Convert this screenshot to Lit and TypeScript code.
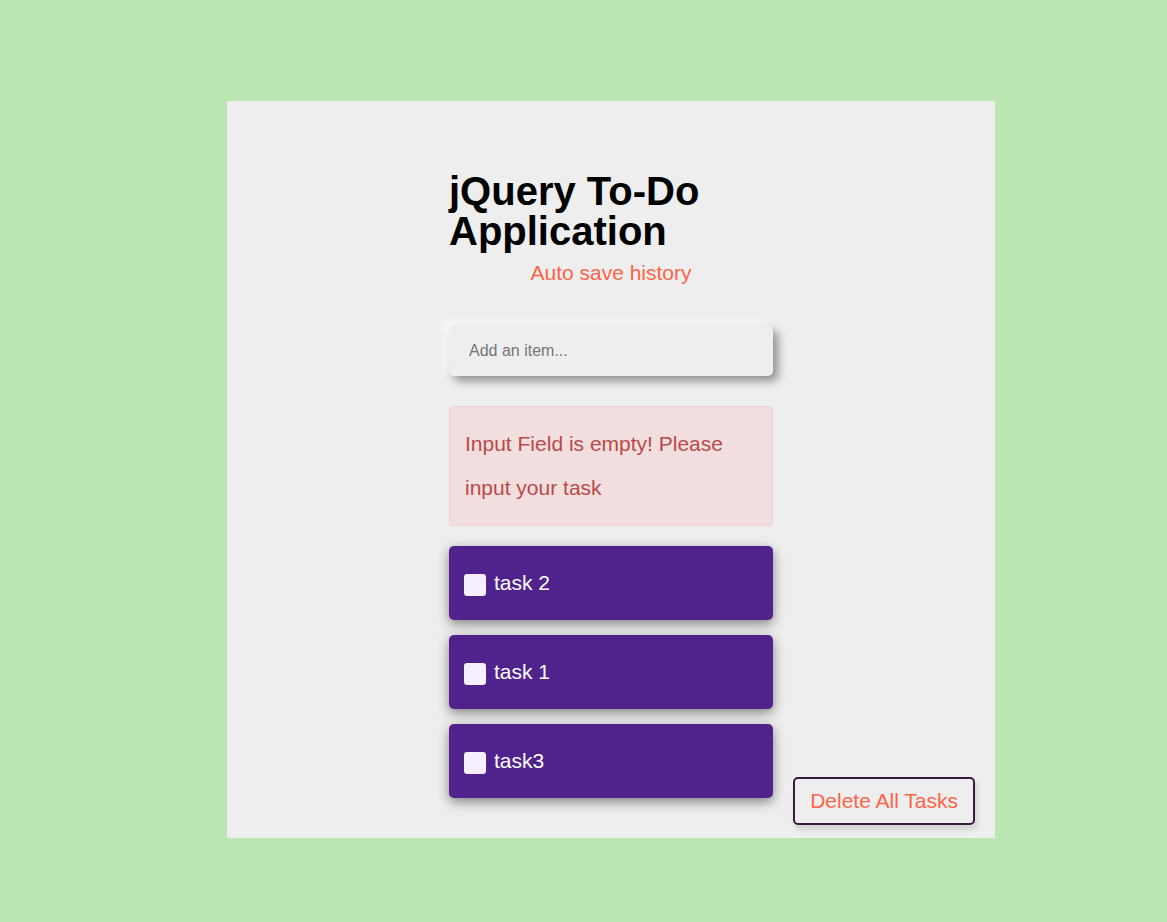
import { LitElement, html, css } from "lit";
import { customElement, state } from "lit/decorators.js";

@customElement("todo-item")
class TodoItem extends LitElement {
  static properties = { label: { type: String } };
  declare label: string;

  static styles = css`
    :host {
      display: block;
    }
    .task {
      display: flex;
      align-items: center;
      gap: 8px;
      padding: 15px;
      border-radius: 5px;
      background: #50238c;
      color: #fff;
      line-height: 44px;
      box-shadow: 0 4px 12px 0 rgba(0, 0, 0, 0.45);
    }
    .check {
      appearance: none;
      flex: none;
      width: 22px;
      height: 22px;
      margin: 4px 0 0;
      border-radius: 3px;
      background: #f7effd;
      cursor: pointer;
    }
    .check:checked {
      background: #ff6347;
    }
  `;

  render() {
    return html`
      <label class="task">
        <input class="check" type="checkbox" />
        <span>${this.label}</span>
      </label>
    `;
  }
}

@customElement("app-root")
class AppRoot extends LitElement {
  @state() tasks = ["task 2", "task 1", "task3"];
  @state() empty = true;

  static styles = css`
    * {
      box-sizing: border-box;
    }
    :host {
      display: block;
      box-sizing: border-box;
      min-height: 100vh;
      padding: 101px 0 84px 55px;
      background: #bbe6b3;
      font-family: "Liberation Sans", Arial, sans-serif;
      font-size: 21px;
      line-height: 44px;
    }
    .panel {
      display: grid;
      grid-template-columns: 1fr minmax(0, 324px) 1fr;
      width: 100%;
      max-width: 768px;
      margin: 0 auto;
      background: #eee;
    }
    .content {
      grid-column: 2;
      padding: 70px 0 40px;
    }
    .title {
      margin: 0;
      font-size: 40px;
      line-height: 40px;
      font-weight: 700;
      color: #000;
    }
    .subtitle {
      margin: 0 0 31px;
      text-align: center;
      color: #ff6347;
    }
    .field {
      display: block;
      width: 100%;
      height: 50px;
      padding: 0 20px;
      border: 0;
      border-radius: 5px;
      outline: 0;
      background: #eee;
      font: inherit;
      font-size: 16px;
      line-height: 20px;
      box-shadow: 5px 5px 10px 0 rgba(0, 0, 0, 0.4),
        -5px -5px 10px 0 rgba(255, 255, 255, 0.7);
    }
    .field::placeholder {
      color: #757575;
      opacity: 1;
    }
    .alert {
      margin: 30px 0 20px;
      padding: 15px;
      border: 1px solid #eed3d7;
      border-radius: 4px;
      background: #f2dede;
      color: #b94a48;
    }
    .tasks {
      display: grid;
      gap: 15px;
      margin: 0;
      padding: 0;
      list-style: none;
    }
    .clear {
      grid-column: 3;
      align-self: end;
      justify-self: end;
      height: 48px;
      margin: 0 20px 13px;
      padding: 0 15px;
      border: 2px solid #3a1a40;
      border-radius: 5px;
      background: #eee;
      color: #ff6347;
      font: inherit;
      line-height: 44px;
      white-space: nowrap;
      cursor: pointer;
      box-shadow: 2px 4px 4px 1px rgba(0, 0, 0, 0.1);
    }
  `;

  private onKey(e: KeyboardEvent) {
    if (e.key !== "Enter") return;
    const field = e.target as HTMLInputElement;
    const text = field.value.trim();
    this.empty = text === "";
    if (text) {
      this.tasks = [...this.tasks, text];
      field.value = "";
    }
  }

  render() {
    return html`
      <main class="panel">
        <div class="content">
          <h1 class="title">jQuery To-Do Application</h1>
          <p class="subtitle">Auto save history</p>
          <input
            class="field"
            type="text"
            placeholder="Add an item..."
            aria-label="Add an item..."
            @keydown=${this.onKey}
          />
          ${this.empty
            ? html`<div class="alert" role="alert">Input Field is empty! Please input your task</div>`
            : null}
          <ul class="tasks">
            ${this.tasks.map((t) => html`<li><todo-item .label=${t}></todo-item></li>`)}
          </ul>
        </div>
        <button class="clear" type="button" @click=${() => (this.tasks = [])}>Delete All Tasks</button>
      </main>
    `;
  }
}
